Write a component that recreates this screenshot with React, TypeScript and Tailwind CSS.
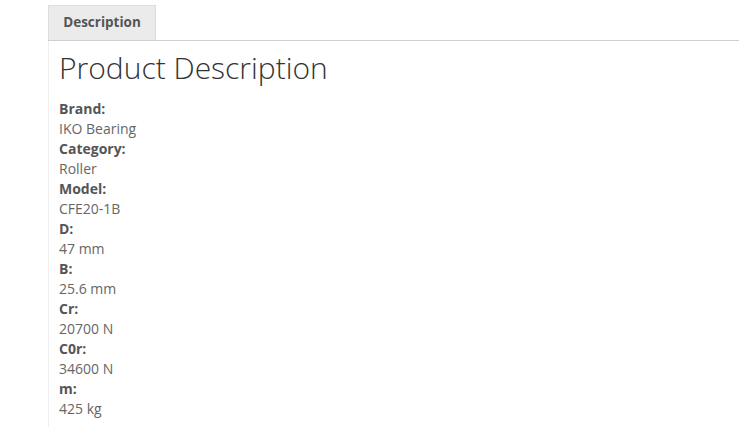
export default function App() {
  const rows: [string, string][] = [
    ["Brand:", "IKO Bearing"],
    ["Category:", "Roller"],
    ["Model:", "CFE20-1B"],
    ["D:", "47 mm"],
    ["B:", "25.6 mm"],
    ["Cr:", "20700 N"],
    ["C0r:", "34600 N"],
    ["m:", "425 kg"],
  ];
  return (
    <div
      className="w-[739px] h-[427px] bg-white overflow-hidden pl-[48px] pt-[5px]"
      style={{ fontFamily: '"Open Sans", sans-serif' }}
    >
      <div className="flex border-b border-[#cfcfcf]">
        <div className="h-[35px] w-[108px] bg-[#ebebeb] border border-b-0 border-[#dddddd] flex items-center justify-center pb-[2px] text-[13.5px] font-bold text-[#555555]">
          Description
        </div>
      </div>
      <div className="border-l border-[#eeeeee] pl-[10px] pt-[6px] pb-[20px]">
        <h1 className="text-[30px] font-light leading-[42px] text-[#333333]">
          Product Description
        </h1>
        <div className="mt-[10px] text-[14px] leading-[20px] text-[#666666]">
          {rows.map(([k, v]) => (
            <div key={k}>
              <div className="font-bold text-[#555555]">{k}</div>
              <div>{v}</div>
            </div>
          ))}
        </div>
      </div>
    </div>
  );
}
